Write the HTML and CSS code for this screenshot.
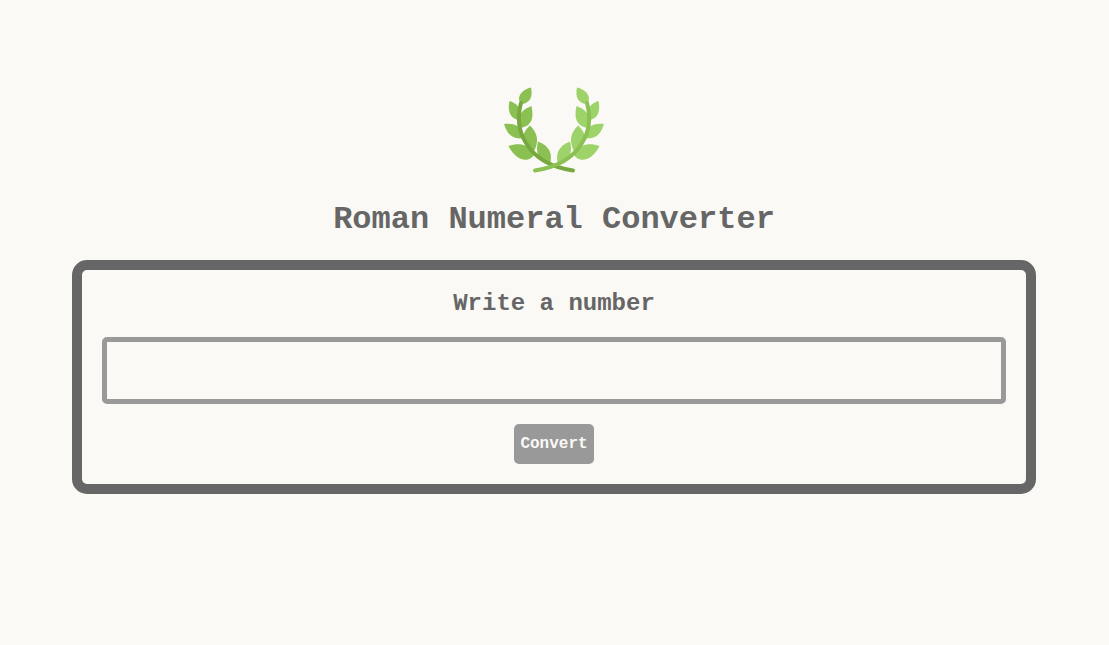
FILE: index.html
```html
<!DOCTYPE html>
<html lang="en">
<head>
<meta charset="utf-8">
<meta name="viewport" content="width=device-width, initial-scale=1">
<title>Roman Numeral Converter</title>
<link rel="stylesheet" href="styles.css">
</head>
<body>
<main class="page">
  <svg class="logo" viewBox="0 0 100 100" aria-hidden="true">
    <defs>
      <g id="leaves">
        <path d="M27 7.500C19 9.500 15 14 15 19C15 22 17 24 18 24C26 23 29 17 27 7.500Z"/>
        <path d="M5.500 21C12 23 16 27 16 33V40C7 40 3 32 5.500 21Z"/>
        <path d="M27.500 26C20 29 16 32 16 38V48C28 46 30 38 27.500 26Z"/>
        <path d="M0 44C10 43 16 46 17 52L19 58C9 60 3 54 0 44Z"/>
        <path d="M26 45.500C20 51 18 56 20 62L30 71C35 62 34 53 26 45.500Z"/>
        <path d="M4.500 66C14 63 22 63 31 73C27 83 13 83 4.500 66Z"/>
        <path d="M34 61.500C32 70 33 76 38 80L46 84C49 73 45 66 34 61.500Z"/>
      </g>
    </defs>
    <use href="#leaves" class="leaf-left"/>
    <use href="#leaves" class="leaf-right" transform="translate(100 0) scale(-1 1)"/>
    <path class="stem stem-left" d="M17 23C13 38 15 52 22 63C31 78 45 87 69 90.500"/>
    <path class="stem stem-right" d="M83 23C87 38 85 52 78 63C69 78 55 87 31 90.500"/>
  </svg>
  <h1 class="title">Roman Numeral Converter</h1>
  <form class="converter">
    <label class="label" for="number">Write a number</label>
    <input class="number" id="number" type="text" inputmode="numeric">
    <button class="convert" type="button">Convert</button>
  </form>
</main>
</body>
</html>
```
FILE: styles.css
```css
* {
  box-sizing: border-box;
}

body {
  margin: 0;
  background: #faf9f5;
  color: #666;
  font-family: "Courier New", "Liberation Mono", monospace;
  font-weight: bold;
}

.page {
  display: flex;
  flex-direction: column;
  align-items: center;
  gap: 20px;
  padding: 80px 73px 80px 72px;
}

.logo {
  width: 100px;
  height: 100px;
}

.leaf-left {
  fill: #8bc053;
}

.leaf-right {
  fill: #9ed36a;
}

.stem {
  fill: none;
  stroke-width: 4;
  stroke-linecap: round;
}

.stem-left {
  stroke: #78a840;
}

.stem-right {
  stroke: #8bc053;
}

.title {
  margin: 0;
  font-size: 32px;
  line-height: 40px;
  text-align: center;
}

.converter {
  display: flex;
  flex-direction: column;
  align-items: center;
  gap: 20px;
  width: 100%;
  padding: 20px;
  border: 10px solid #666;
  border-radius: 15px;
}

.label {
  font-size: 24px;
  line-height: 27px;
}

.number {
  width: 100%;
  height: 67px;
  padding: 10px;
  border: 5px solid #999;
  border-radius: 5px;
  background: transparent;
  color: #666;
  font: inherit;
  font-size: 32px;
  text-align: center;
}

.convert {
  width: 80px;
  height: 40px;
  padding: 0;
  border: 0;
  border-radius: 5px;
  background: #999;
  color: #faf9f5;
  font: inherit;
  font-size: 16px;
}
```
